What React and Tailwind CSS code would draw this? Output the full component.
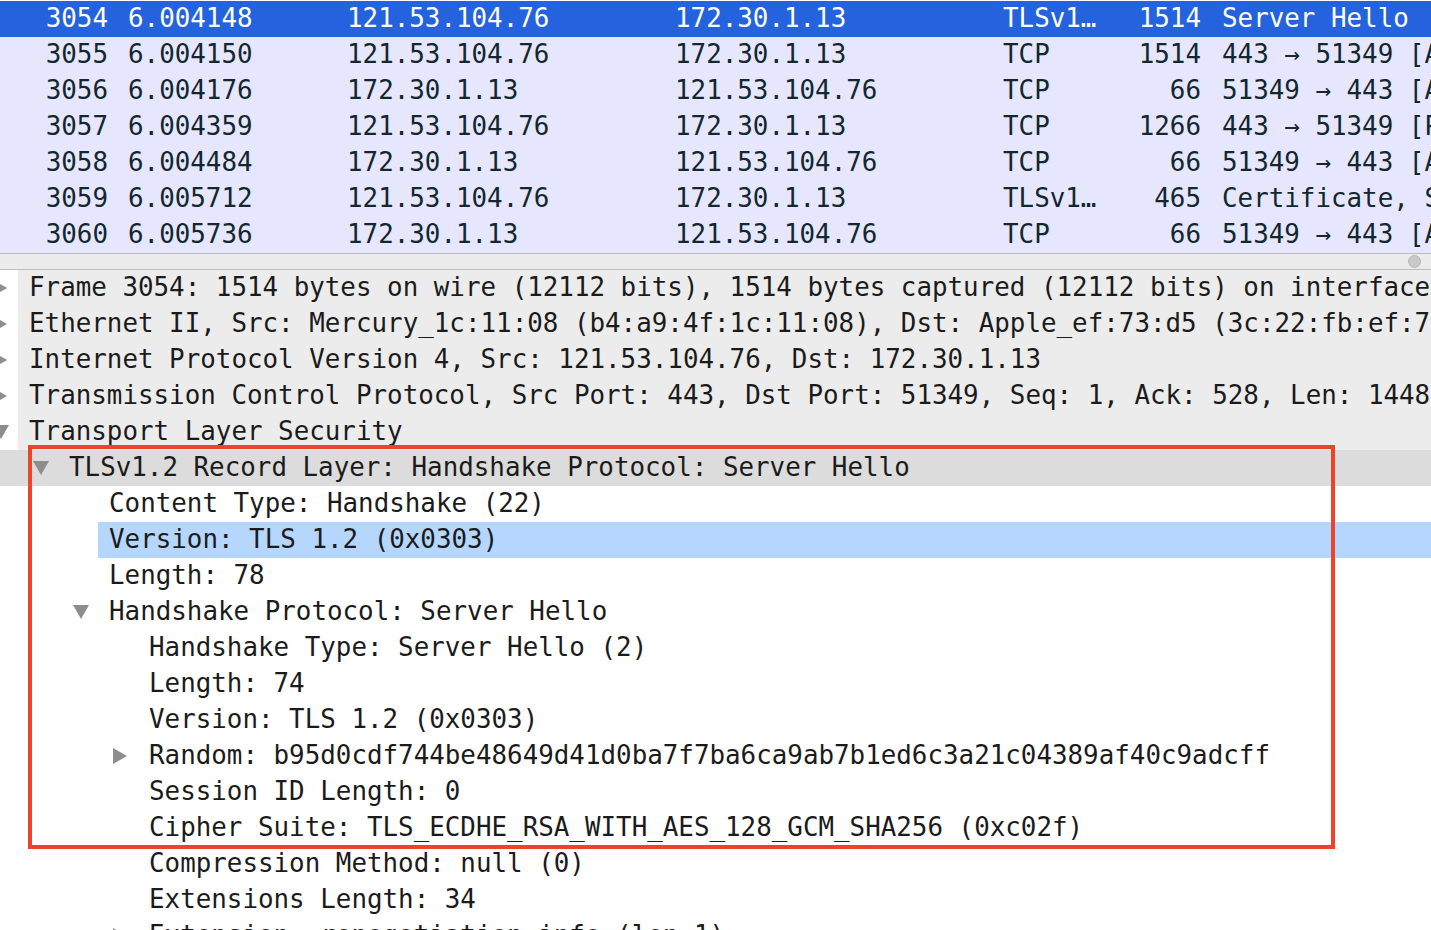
const mono = { fontFamily: '"DejaVu Sans Mono", "Liberation Mono", monospace' };

const packets = [
  ['3054', '6.004148', '121.53.104.76', '172.30.1.13', 'TLSv1…', '1514', 'Server Hello'],
  ['3055', '6.004150', '121.53.104.76', '172.30.1.13', 'TCP', '1514', '443 → 51349 [ACK] Seq=1 Ack=528 Win=65535 Len=1448'],
  ['3056', '6.004176', '172.30.1.13', '121.53.104.76', 'TCP', '66', '51349 → 443 [ACK] Seq=528 Ack=1449 Win=262144 Len=0'],
  ['3057', '6.004359', '121.53.104.76', '172.30.1.13', 'TCP', '1266', '443 → 51349 [PSH, ACK] Seq=1449 Ack=528 Win=65535'],
  ['3058', '6.004484', '172.30.1.13', '121.53.104.76', 'TCP', '66', '51349 → 443 [ACK] Seq=528 Ack=2649 Win=262144 Len=0'],
  ['3059', '6.005712', '121.53.104.76', '172.30.1.13', 'TLSv1…', '465', 'Certificate, Server Key Exchange, Server Hello Done'],
  ['3060', '6.005736', '172.30.1.13', '121.53.104.76', 'TCP', '66', '51349 → 443 [ACK] Seq=528 Ack=3048 Win=262144 Len=0'],
];

// level, toggle, text, look
const tree = [
  [0, 'right', 'Frame 3054: 1514 bytes on wire (12112 bits), 1514 bytes captured (12112 bits) on interface en0, id 0', 'parent'],
  [0, 'right', 'Ethernet II, Src: Mercury_1c:11:08 (b4:a9:4f:1c:11:08), Dst: Apple_ef:73:d5 (3c:22:fb:ef:73:d5)', 'parent'],
  [0, 'right', 'Internet Protocol Version 4, Src: 121.53.104.76, Dst: 172.30.1.13', 'parent'],
  [0, 'right', 'Transmission Control Protocol, Src Port: 443, Dst Port: 51349, Seq: 1, Ack: 528, Len: 1448', 'parent'],
  [0, 'down', 'Transport Layer Security', 'parent'],
  [1, 'down', 'TLSv1.2 Record Layer: Handshake Protocol: Server Hello', 'record'],
  [2, null, 'Content Type: Handshake (22)'],
  [2, null, 'Version: TLS 1.2 (0x0303)', 'selected'],
  [2, null, 'Length: 78'],
  [2, 'down', 'Handshake Protocol: Server Hello'],
  [3, null, 'Handshake Type: Server Hello (2)'],
  [3, null, 'Length: 74'],
  [3, null, 'Version: TLS 1.2 (0x0303)'],
  [3, 'right', 'Random: b95d0cdf744be48649d41d0ba7f7ba6ca9ab7b1ed6c3a21c04389af40c9adcff'],
  [3, null, 'Session ID Length: 0'],
  [3, null, 'Cipher Suite: TLS_ECDHE_RSA_WITH_AES_128_GCM_SHA256 (0xc02f)'],
  [3, null, 'Compression Method: null (0)'],
  [3, null, 'Extensions Length: 34'],
  [3, 'right', 'Extension: renegotiation_info (len=1)'],
];

function Toggle({ dir }) {
  if (dir === 'down') {
    return (
      <svg width="16" height="14" viewBox="0 0 16 14">
        <path d="M0 0 L16 0 L8 14 Z" fill="#8d8d8d" />
      </svg>
    );
  }
  if (dir === 'right') {
    return (
      <svg width="14" height="16" viewBox="0 0 14 16">
        <path d="M0 0 L14 8 L0 16 Z" fill="#8d8d8d" />
      </svg>
    );
  }
  return null;
}

export default function App() {
  return (
    <div className="relative w-[1431px] h-[930px] overflow-hidden bg-white text-[25.86px]" style={mono}>
      {/* packet list */}
      <div className="pt-px bg-white">
        {packets.map((p, i) => {
          const sel = i === 0;
          return (
            <div
              key={p[0]}
              className={`flex h-[36px] items-start leading-[34px] whitespace-nowrap ${sel ? 'bg-[#2463dd] text-white' : 'bg-[#e7e6ff] text-[#12272e]'}`}
            >
              <div className="w-[108px] shrink-0 text-right">{p[0]}</div>
              <div className="w-[239px] shrink-0 pl-[20px]">{p[1]}</div>
              <div className="w-[328px] shrink-0">{p[2]}</div>
              <div className="w-[328px] shrink-0">{p[3]}</div>
              <div className="w-[123px] shrink-0">{p[4]}</div>
              <div className="w-[75px] shrink-0 text-right">{p[5]}</div>
              <div className="pl-[21px] shrink-0">{p[6]}</div>
            </div>
          );
        })}
      </div>

      {/* splitter */}
      <div className="h-[17px] border-y border-[#bdbdbd] bg-[#ececec] flex items-center justify-end pr-[10px]">
        <div className="w-[13px] h-[13px] rounded-full bg-[#c9c9c9] border border-[#b8b8b8]" />
      </div>

      {/* detail tree */}
      <div className="text-[#1b1b1b]">
        {tree.map(([level, toggle, text, look], i) => {
          const rowBg =
            look === 'parent'
              ? 'bg-[linear-gradient(to_right,#ffffff_18px,#ececec_18px)]'
              : look === 'record'
              ? 'bg-[#dcdcdc]'
              : 'bg-white';
          return (
            <div key={i} className={`flex h-[36px] items-center whitespace-nowrap ${rowBg}`}>
              <div className="w-[25px] shrink-0 flex items-center" style={{ marginLeft: level * 40 - 7 }}>
                <Toggle dir={toggle} />
              </div>
              <div className={`flex-1 h-full pl-[11px] leading-[34px] ${look === 'selected' ? 'bg-[#b5d6fe]' : ''}`}>{text}</div>
            </div>
          );
        })}
      </div>

      {/* annotation */}
      <div className="absolute left-[28px] top-[445px] w-[1307px] h-[404px] border-4 border-[#ee4229] pointer-events-none" />
    </div>
  );
}
